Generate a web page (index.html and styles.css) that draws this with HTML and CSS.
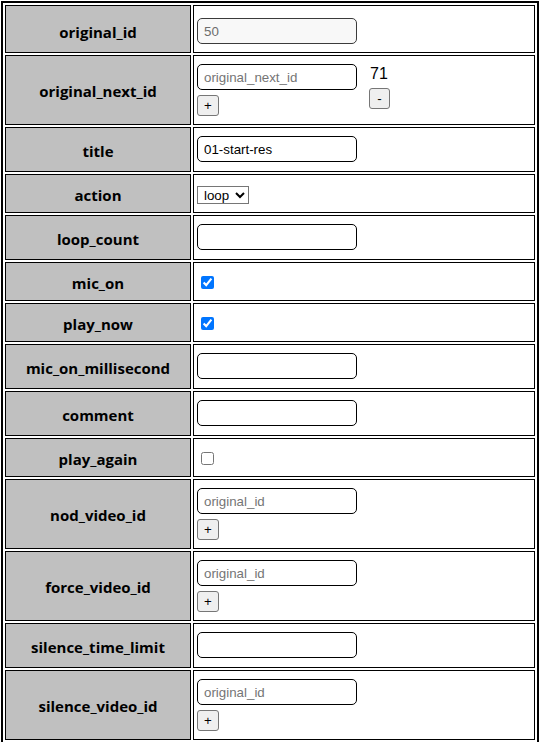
FILE: index.html
```html
<!DOCTYPE html>
<html>
<head>
<meta charset="utf-8">
<link rel="stylesheet" href="styles.css">
</head>
<body>
<table class="form-table">
  <tr>
    <th class="first-head">original_id</th>
    <td class="first-cell"><input class="txt disabled" type="text" value="50" disabled></td>
  </tr>
  <tr>
    <th>original_next_id</th>
    <td class="stack-cell">
      <div class="pair">
        <div class="stack">
          <input class="txt" type="text" placeholder="original_next_id">
          <button class="btn">+</button>
        </div>
        <div class="stack chosen">
          <span class="num">71</span>
          <button class="btn">-</button>
        </div>
      </div>
    </td>
  </tr>
  <tr>
    <th>title</th>
    <td class="input-cell"><input class="txt" type="text" value="01-start-res"></td>
  </tr>
  <tr>
    <th>action</th>
    <td class="small-cell"><select class="sel"><option>loop</option></select></td>
  </tr>
  <tr>
    <th>loop_count</th>
    <td class="input-cell"><input class="txt" type="text"></td>
  </tr>
  <tr>
    <th>mic_on</th>
    <td class="small-cell"><input class="chk" type="checkbox" checked></td>
  </tr>
  <tr>
    <th>play_now</th>
    <td class="small-cell"><input class="chk" type="checkbox" checked></td>
  </tr>
  <tr>
    <th>mic_on_millisecond</th>
    <td class="input-cell"><input class="txt" type="text"></td>
  </tr>
  <tr>
    <th>comment</th>
    <td class="input-cell"><input class="txt" type="text"></td>
  </tr>
  <tr>
    <th>play_again</th>
    <td class="small-cell"><input class="chk" type="checkbox"></td>
  </tr>
  <tr>
    <th>nod_video_id</th>
    <td class="stack-cell">
      <div class="stack">
        <input class="txt" type="text" placeholder="original_id">
        <button class="btn">+</button>
      </div>
    </td>
  </tr>
  <tr>
    <th>force_video_id</th>
    <td class="stack-cell">
      <div class="stack">
        <input class="txt" type="text" placeholder="original_id">
        <button class="btn">+</button>
      </div>
    </td>
  </tr>
  <tr>
    <th>silence_time_limit</th>
    <td class="input-cell"><input class="txt" type="text"></td>
  </tr>
  <tr>
    <th>silence_video_id</th>
    <td class="stack-cell">
      <div class="stack">
        <input class="txt" type="text" placeholder="original_id">
        <button class="btn">+</button>
      </div>
    </td>
  </tr>
</table>
</body>
</html>
```
FILE: styles.css
```css
html, body {
  margin: 0;
  padding: 0;
  background: #fff;
}
body {
  font-family: "Liberation Sans", Arial, sans-serif;
  font-size: 16px;
  color: #000;
}
.form-table {
  margin: 1px 0 0 1px;
  width: 538px;
  border: 2px solid #000;
  border-spacing: 2px;
  border-collapse: separate;
}
.form-table th,
.form-table td {
  border: 1px solid #000;
  vertical-align: middle;
}
.form-table th {
  width: 180px;
  background: #c0c0c0;
  font-family: "Open Sans", "DejaVu Sans", sans-serif;
  font-weight: 700;
  font-size: 15px;
  text-align: center;
  padding: 2px 2px 0;
  color: #000;
}
.form-table th.first-head {
  padding-top: 6px;
}
.form-table td {
  padding: 8px 3px;
}
.form-table td.first-cell {
  padding: 12px 3px 8px;
}
.form-table td.input-cell {
  padding: 8px 3px 9px;
}
.form-table td.stack-cell {
  padding: 8px 3px 8px;
}
.form-table td.small-cell {
  padding: 8px 3px;
}
.txt {
  box-sizing: border-box;
  width: 160px;
  height: 26px;
  margin: 0;
  padding: 1px 6px;
  border: 1px solid #000;
  border-radius: 5px;
  font-family: "Liberation Sans", Arial, sans-serif;
  font-size: 13.33px;
  color: #000;
  background: #fff;
  display: block;
  outline: none;
}
.txt::placeholder {
  color: #757575;
}
.txt.disabled {
  background: #f8f8f8;
  color: #6d6d6d;
  border-color: #3b3b3b;
}
.stack {
  display: flex;
  flex-direction: column;
  align-items: flex-start;
  gap: 5px;
}
.pair {
  display: flex;
  align-items: flex-start;
  gap: 12px;
}
.chosen {
  padding-top: 1px;
  gap: 5px;
}
.num {
  font-size: 16px;
  line-height: 18px;
  color: #000;
  padding-left: 1px;
}
.btn {
  box-sizing: border-box;
  height: 21px;
  min-width: 21px;
  margin: 0;
  padding: 0 6px;
  border: 1px solid #767676;
  border-radius: 3px;
  background: #efefef;
  font-family: "Liberation Sans", Arial, sans-serif;
  font-size: 13.33px;
  line-height: 17px;
  color: #000;
}
.sel {
  box-sizing: border-box;
  width: 52px;
  height: 18px;
  margin: 3px 0 0;
  padding: 0 2px;
  border: 1px solid #767676;
  border-radius: 0;
  font-family: "Liberation Sans", Arial, sans-serif;
  font-size: 13.33px;
  background: #fff;
  color: #000;
  display: block;
}
.chk {
  display: block;
  width: 13px;
  height: 13px;
  margin: 5px 3px 3px 4px;
  accent-color: #0075ff;
}
```
